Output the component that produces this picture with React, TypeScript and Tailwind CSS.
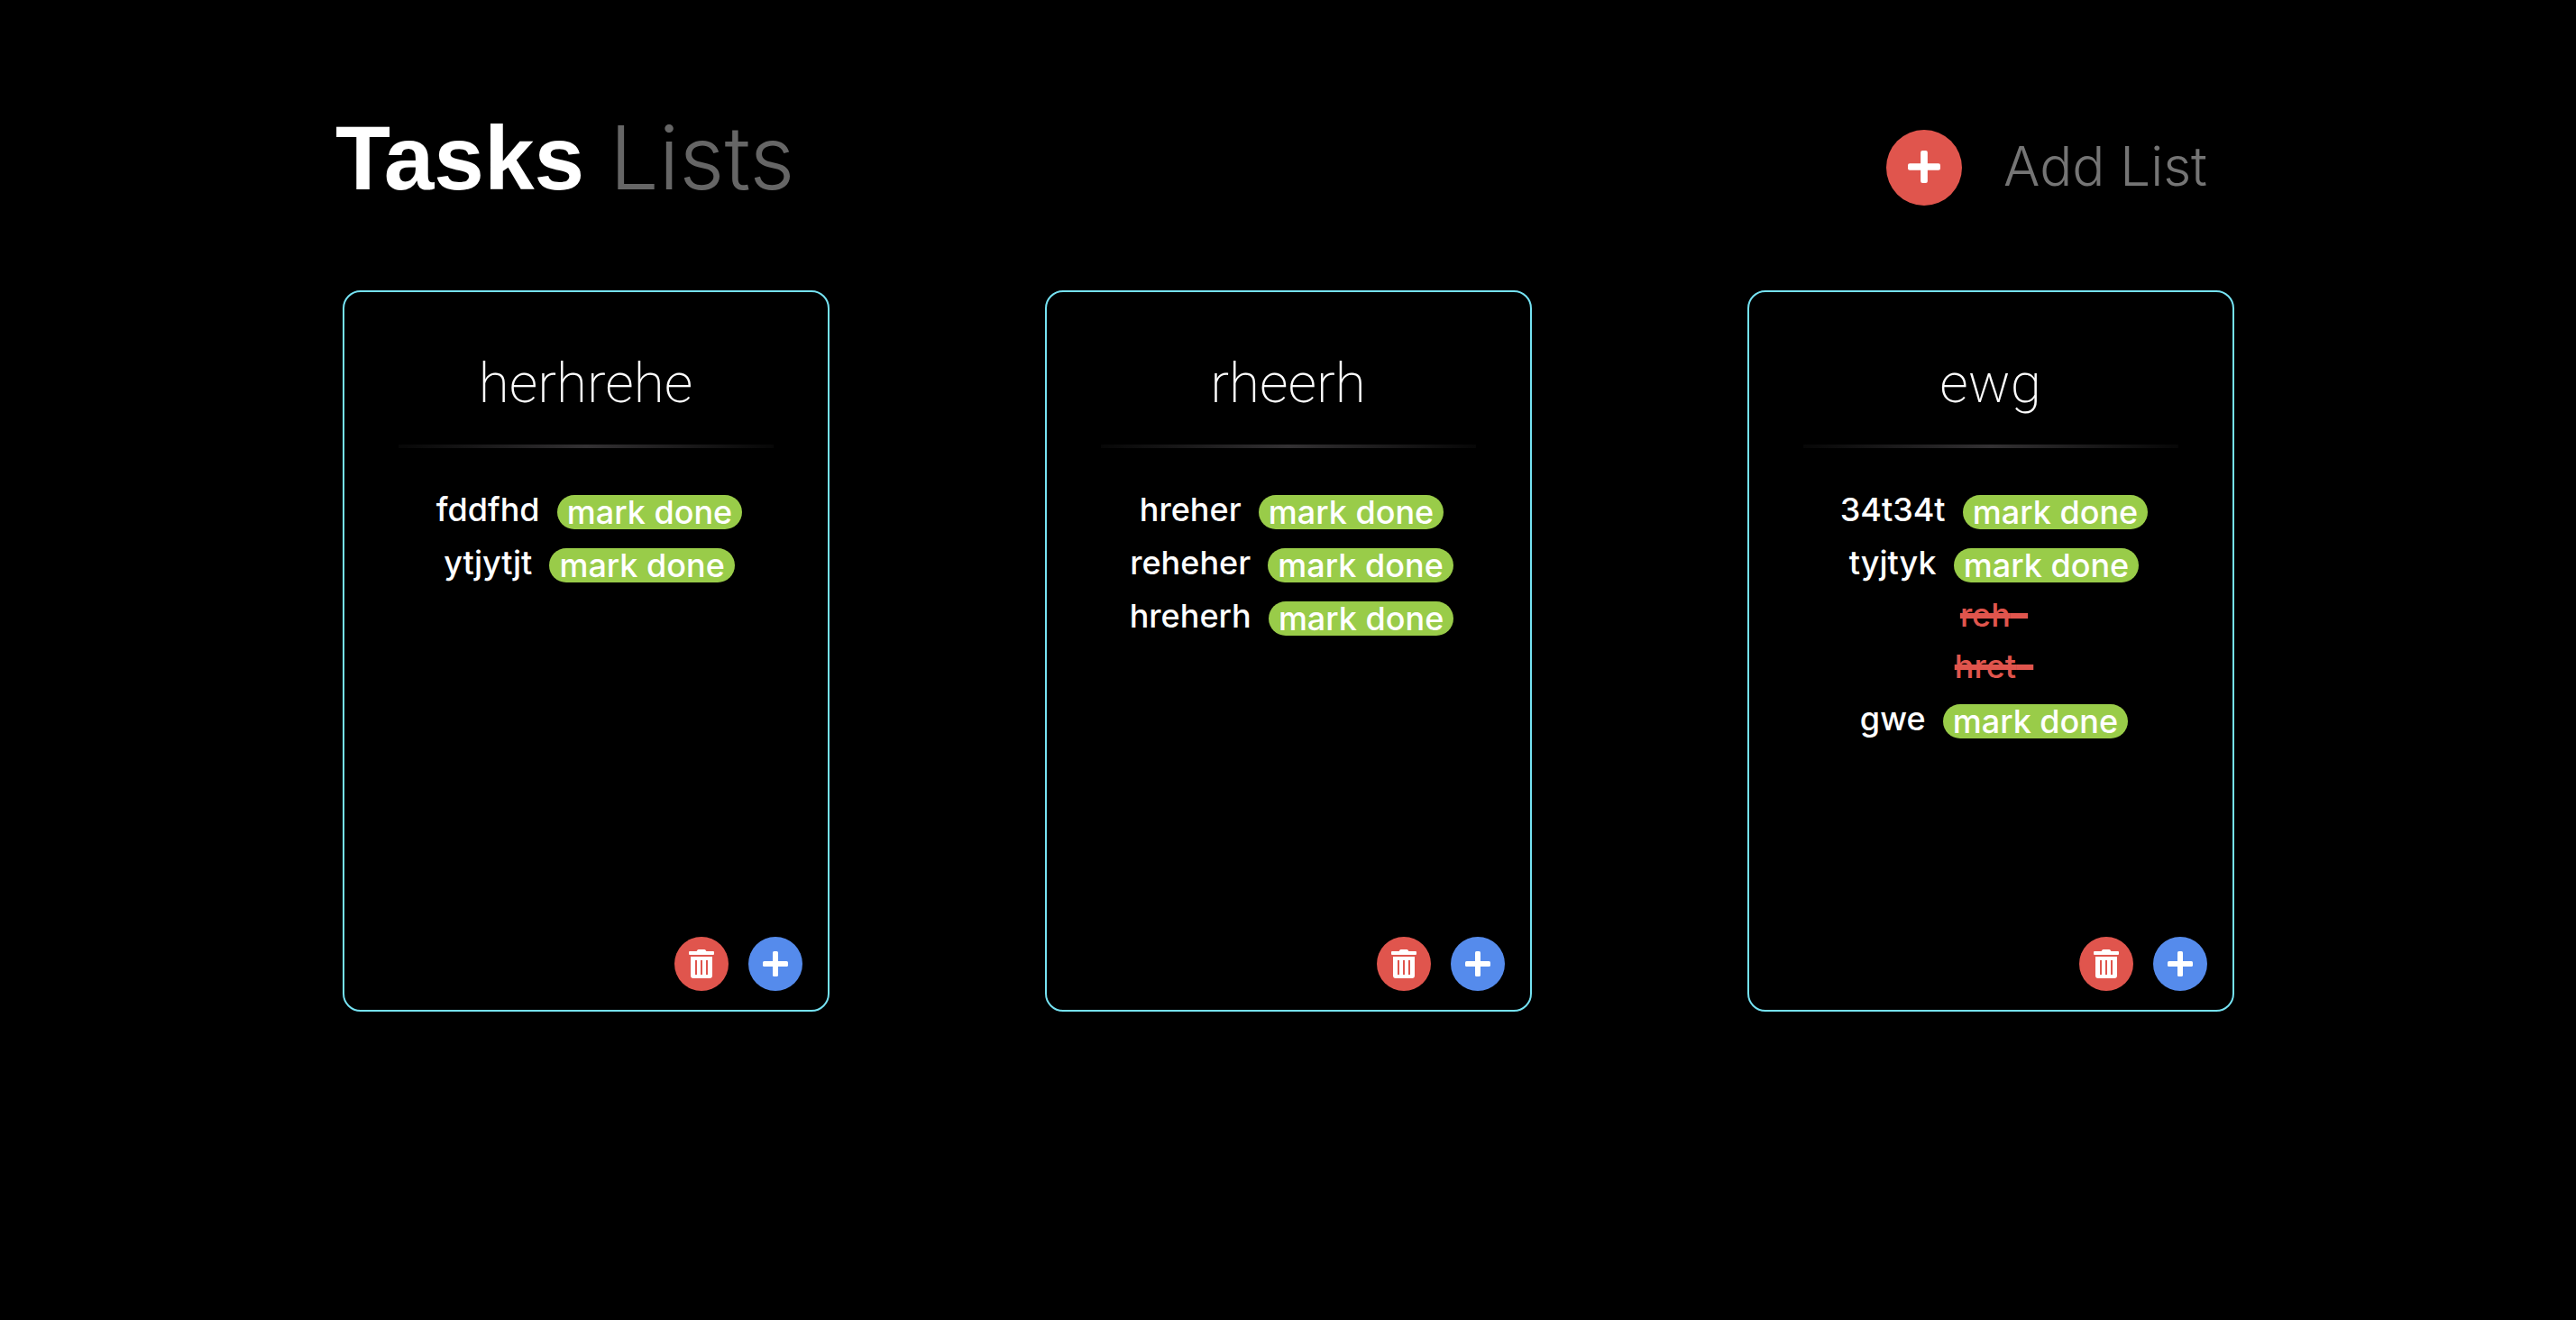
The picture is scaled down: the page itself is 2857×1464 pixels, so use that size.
type Task = { name: string; done?: boolean };
type TaskList = { title: string; tasks: Task[] };

const lists: TaskList[] = [
  { title: "herhrehe", tasks: [{ name: "fddfhd" }, { name: "ytjytjt" }] },
  { title: "rheerh", tasks: [{ name: "hreher" }, { name: "reheher" }, { name: "hreherh" }] },
  {
    title: "ewg",
    tasks: [
      { name: "34t34t" },
      { name: "tyjtyk" },
      { name: "reh", done: true },
      { name: "hret", done: true },
      { name: "gwe" },
    ],
  },
];

function PlusIcon({ className }: { className: string }) {
  return (
    <svg viewBox="0 0 28 28" className={className} fill="currentColor" aria-hidden="true">
      <rect x="11" y="0" width="6" height="28" rx="1.6" />
      <rect x="0" y="11" width="28" height="6" rx="1.6" />
    </svg>
  );
}

function TrashIcon({ className }: { className: string }) {
  return (
    <svg viewBox="0 0 28 32" className={className} fill="currentColor" aria-hidden="true">
      <path d="M1 2H8.6L9.6.6Q10 0 10.8 0H17.2Q18 0 18.4.6L19.4 2H27Q28 2 28 3V5Q28 6 27 6H1Q0 6 0 5V3Q0 2 1 2Z" />
      <path
        fillRule="evenodd"
        d="M2 8H26V29Q26 32 23 32H5Q2 32 2 29ZM7 12V28H9V12ZM13 12V28H15V12ZM19 12V28H21V12Z"
      />
    </svg>
  );
}

function TaskRow({ task }: { task: Task }) {
  if (task.done) {
    return (
      <li className="flex h-[57px] items-center">
        <s className="text-[#e0554d] decoration-[6px]">{task.name}&nbsp;&nbsp;</s>
      </li>
    );
  }
  return (
    <li className="flex h-[59px] items-center">
      <span>{task.name}&nbsp;&nbsp;</span>
      <button
        type="button"
        className="mt-[5px] flex h-[38px] items-center rounded-full bg-[#99cc49] px-[11px] pt-px"
      >
        mark done
      </button>
    </li>
  );
}

function ListCard({ list }: { list: TaskList }) {
  return (
    <section className="flex min-h-[800px] w-[540px] flex-col rounded-[20px] border-2 border-[#75e2f2]">
      <h2 className="mt-[65px] text-center font-['Roboto',sans-serif] text-[62px] leading-[72px] font-extralight">
        {list.title}
      </h2>
      <div className="mx-[60px] mt-8 h-1 bg-linear-to-r from-[#070707] via-[#333133] to-[#070707]" />
      <ul className="mt-[39px] flex flex-col items-center pl-2 text-4xl leading-[43px] font-[450]">
        {list.tasks.map((task) => (
          <TaskRow key={task.name} task={task} />
        ))}
      </ul>
      <div className="mt-auto flex justify-end gap-[22px] pr-7 pb-[21px]">
        <button
          type="button"
          aria-label={`Delete ${list.title}`}
          className="flex size-[60px] items-center justify-center rounded-full bg-[#e0554d]"
        >
          <TrashIcon className="h-8 w-7" />
        </button>
        <button
          type="button"
          aria-label={`Add task to ${list.title}`}
          className="flex size-[60px] items-center justify-center rounded-full bg-[#558bec]"
        >
          <PlusIcon className="size-7" />
        </button>
      </div>
    </section>
  );
}

export default function App() {
  return (
    <main className="min-h-screen bg-black pt-[125px] pb-20 font-['Inter',sans-serif] text-white">
      <header className="flex items-start justify-between pr-[409px] pl-[372px]">
        <h1 className="font-['Liberation_Sans',sans-serif] text-[100px] leading-[100px] font-bold">
          Tasks{" "}
          <span className="font-['Inter',sans-serif] text-[97px] font-[350] text-[#666666]">Lists</span>
        </h1>
        <button type="button" className="mt-[19px] flex items-center gap-[46px]">
          <span className="flex size-[84px] items-center justify-center rounded-full bg-[#e0554d]">
            <PlusIcon className="mb-0.5 size-9" />
          </span>
          <span className="pb-1 text-[60px] leading-[72px] font-light text-[#757575]">Add List</span>
        </button>
      </header>
      <div className="mx-[260px] mt-[94px] grid grid-cols-3 justify-items-center">
        {lists.map((list) => (
          <ListCard key={list.title} list={list} />
        ))}
      </div>
    </main>
  );
}
